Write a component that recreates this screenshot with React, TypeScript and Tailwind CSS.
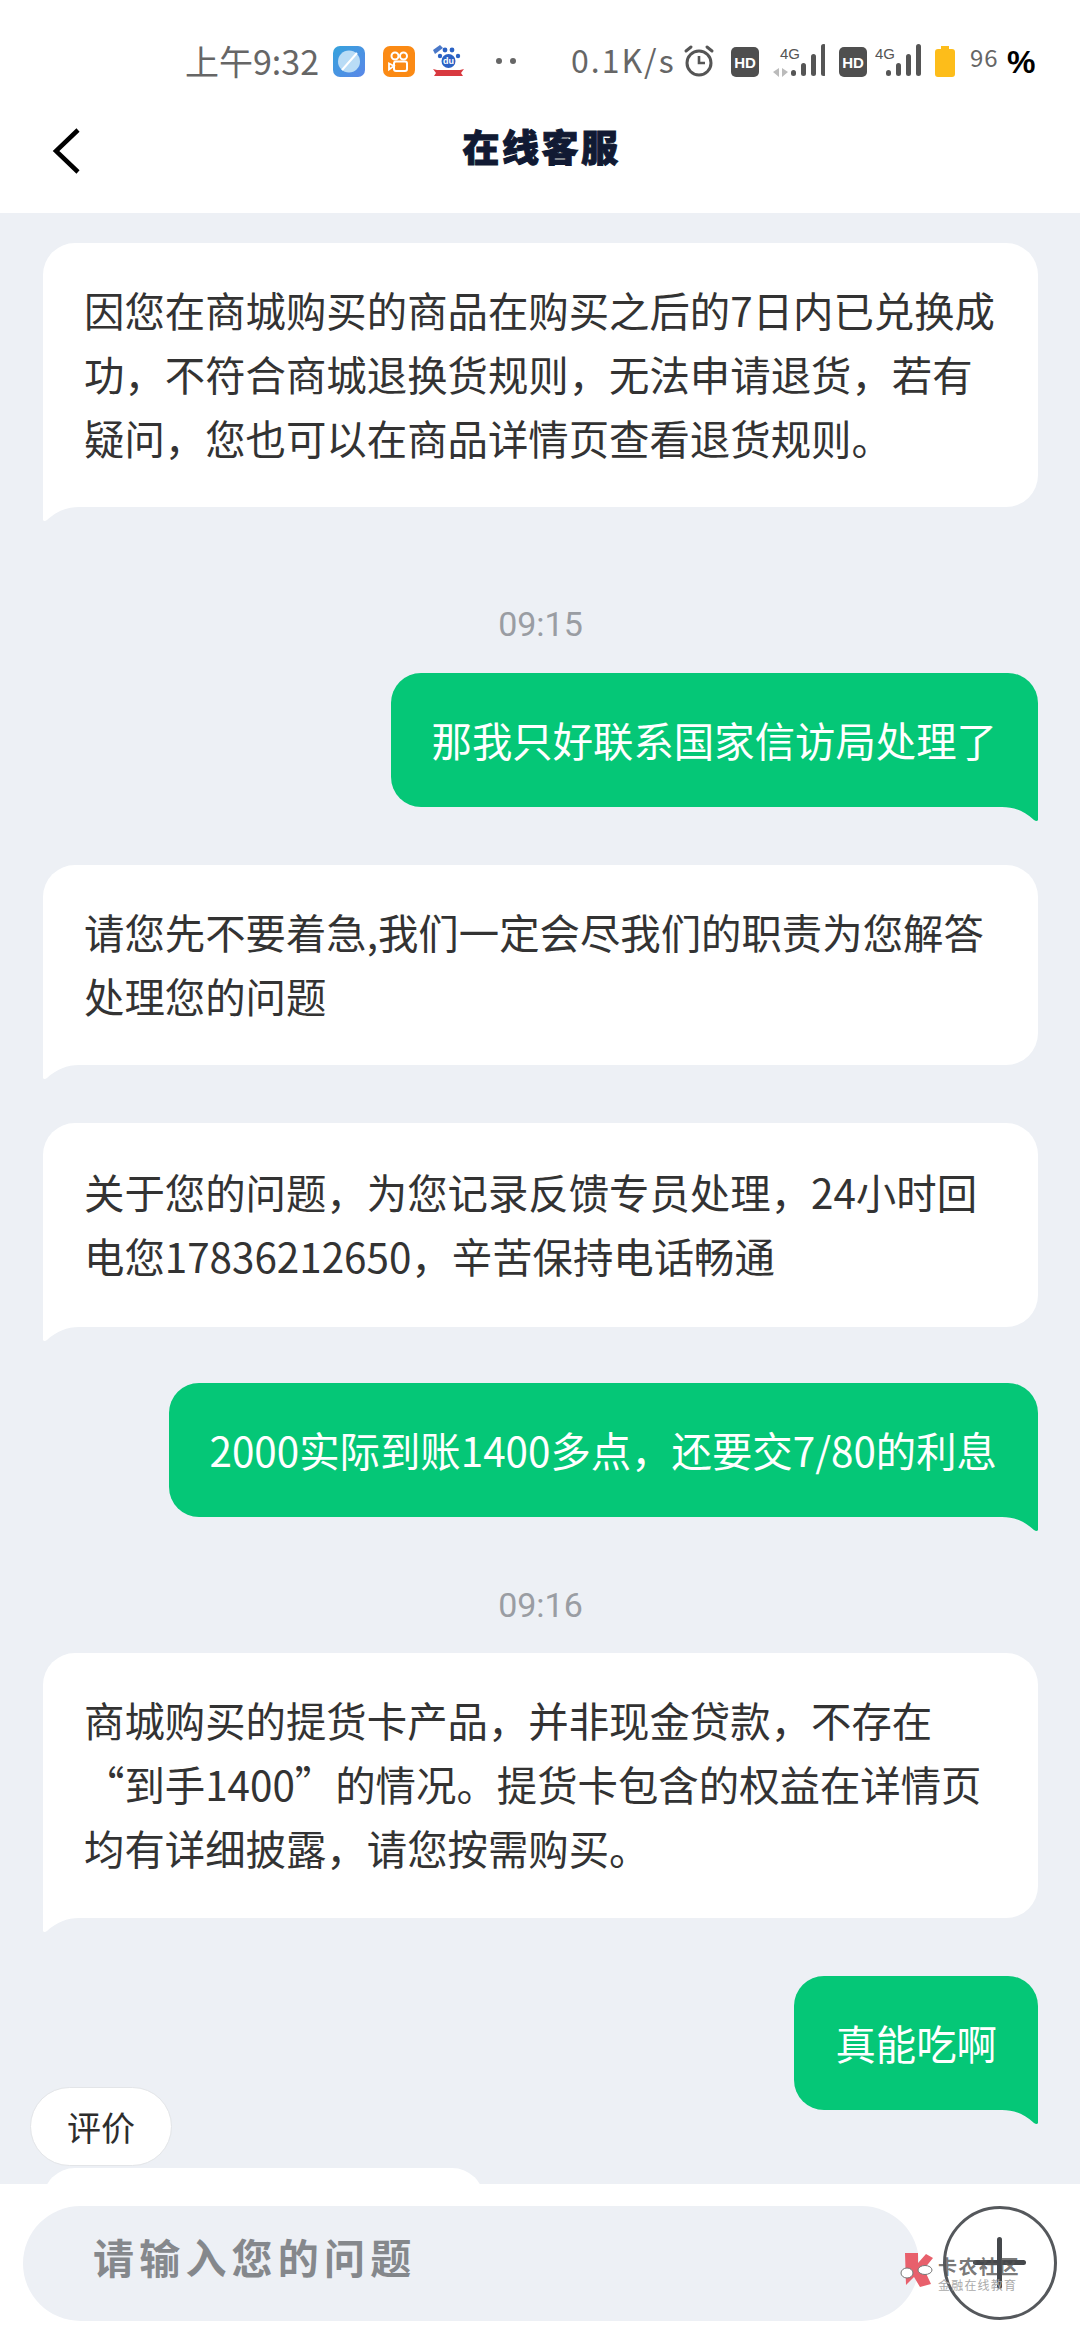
import React from 'react';

const cjk = { fontFamily: '"Noto Sans CJK SC", "Noto Sans", sans-serif' };

const Bubble = ({ side, children, className = '' }: { side: 'left' | 'right'; children: React.ReactNode; className?: string }) => {
  if (side === 'left') {
    return (
      <div className={`relative w-fit max-w-[995px] self-start rounded-[32px] rounded-bl-none bg-white px-[41px] text-[40.4px] leading-[64px] text-[#333333] ${className}`}>
        {children}
        <svg className="absolute left-0 top-full" width="36" height="15" viewBox="0 0 36 15">
          <path d="M0 0H36C24 0 14 4 4 13Q1 15 0 13Z" fill="#ffffff" />
        </svg>
      </div>
    );
  }
  return (
    <div className={`relative w-fit max-w-[995px] self-end rounded-[30px] rounded-br-none bg-[#05c777] px-[41px] text-[40.4px] leading-[64px] text-white ${className}`}>
      {children}
      <svg className="absolute right-0 top-full" width="36" height="15" viewBox="0 0 36 15">
        <path d="M36 0H0C12 0 22 4 32 13Q35 15 36 13Z" fill="#05c777" />
      </svg>
    </div>
  );
};

const Signal = ({ x = 0 }: { x?: number }) => (
  <g transform={`translate(${x} 0)`} fill="#555">
    <rect x="0" y="26" width="5" height="6" rx="2.5" />
    <rect x="10" y="19" width="5" height="13" rx="2.5" />
    <rect x="20" y="10" width="5" height="22" rx="2.5" />
    <rect x="30" y="0" width="5" height="32" rx="2.5" />
  </g>
);

const HdIcon = () => (
  <div className="flex h-[30px] w-[28px] items-center justify-center rounded-[5px] bg-[#4f4f4f] text-[15px] font-bold leading-none text-white" style={{ fontFamily: '"Liberation Sans", sans-serif' }}>
    HD
  </div>
);

const StatusBar = () => (
  <div className="flex h-[79px] shrink-0 items-end bg-white pb-[2px] pl-[185px] text-[#666666]">
    <span className="flex h-[34px] w-[137px] items-center whitespace-nowrap text-[34px]" style={cjk}>上午9:32</span>
    <svg className="ml-[11px]" width="32" height="31" viewBox="0 0 32 31">
      <defs>
        <linearGradient id="blueApp" x1="0" y1="0" x2="1" y2="1">
          <stop offset="0" stopColor="#35a3dc" />
          <stop offset="1" stopColor="#5a86e8" />
        </linearGradient>
      </defs>
      <rect width="32" height="31" rx="7" fill="url(#blueApp)" />
      <circle cx="16" cy="15.5" r="11" fill="#b9dcf6" />
      <path d="M9 24L24 7" stroke="#ffffff" strokeWidth="2" />
    </svg>
    <svg className="ml-[18px]" width="32" height="31" viewBox="0 0 32 31">
      <rect width="32" height="31" rx="7" fill="#fb8a14" />
      <circle cx="12" cy="10" r="3.5" fill="none" stroke="#fff" strokeWidth="2" />
      <circle cx="20.5" cy="10" r="3.5" fill="none" stroke="#fff" strokeWidth="2" />
      <rect x="11" y="15.5" width="13" height="9.5" rx="2" fill="none" stroke="#fff" strokeWidth="2" />
      <path d="M11 20L6 17.5V23.5Z" fill="none" stroke="#fff" strokeWidth="1.8" />
    </svg>
    <svg className="ml-[17px]" width="33" height="32" viewBox="0 0 33 32">
      <path d="M1 5L8 0L11 3L3 9Z" fill="#4a78c8" />
      <circle cx="13" cy="5" r="2.4" fill="#2b62c4" />
      <circle cx="20" cy="5" r="2.4" fill="#2b62c4" />
      <circle cx="8" cy="11" r="2.2" fill="#2b62c4" />
      <circle cx="26" cy="11" r="2.2" fill="#2b62c4" />
      <circle cx="16.5" cy="16" r="7" fill="#2b62c4" />
      <text x="16.5" y="19" textAnchor="middle" fontSize="9" fontWeight="700" fill="#ffffff" fontFamily="Liberation Sans, sans-serif">du</text>
      <path d="M1 24L5 25H28L32 24L29 28L31 31H2L4 28Z" fill="#d8393f" />
    </svg>
    <span className="ml-[31px] mb-[13px] flex gap-[8px]">
      <i className="block h-[6px] w-[6px] rounded-full bg-[#666666]" />
      <i className="block h-[6px] w-[6px] rounded-full bg-[#666666]" />
    </span>
    <span className="ml-[55px] mb-[1px] flex h-[34px] w-[101px] items-center whitespace-nowrap text-[32px] tracking-[2px]" style={cjk}>0.1K/s</span>
    <svg className="ml-[11px]" width="32" height="33" viewBox="0 0 32 33" fill="none" stroke="#555" strokeWidth="3">
      <circle cx="16" cy="19" r="12" />
      <path d="M16 12V19H22" strokeWidth="2.6" />
      <path d="M3 7L8 3M29 7L24 3" strokeLinecap="round" />
    </svg>
    <div className="ml-[16px]"><HdIcon /></div>
    <svg className="ml-[13px]" width="53" height="33" viewBox="0 0 53 33">
      <text x="8" y="15" fontSize="15" fill="#555" fontFamily="Liberation Sans, sans-serif">4G</text>
      <path d="M7 24V33L1 28ZM10 24V33L16 28Z" fill="#bbbbbb" />
      <Signal x={19} />
    </svg>
    <div className="ml-[14px]"><HdIcon /></div>
    <svg className="ml-[8px]" width="46" height="33" viewBox="0 0 46 33">
      <text x="0" y="15" fontSize="15" fill="#555" fontFamily="Liberation Sans, sans-serif">4G</text>
      <Signal x={11} />
    </svg>
    <svg className="ml-[14px]" width="20" height="31" viewBox="0 0 20 31">
      <path d="M6 0H14V3H17Q20 3 20 6V28Q20 31 17 31H3Q0 31 0 28V6Q0 3 3 3H6Z" fill="#fdbd1a" />
    </svg>
    <span className="ml-[15px] mb-[6px] w-[30px] text-[24px] leading-[28px] tracking-[1px]" style={cjk}>96</span>
    <span className="ml-[7px] text-[32px] font-bold leading-[30px] text-black" style={{ fontFamily: '"Liberation Sans", sans-serif' }}>%</span>
  </div>
);

const Header = () => (
  <div className="relative flex h-[134px] shrink-0 items-center justify-center bg-white">
    <svg className="absolute left-[50px] top-[48px]" width="32" height="48" viewBox="0 0 32 48" fill="none">
      <path d="M28 3L6 24L28 45" stroke="#000000" strokeWidth="4.5" />
    </svg>
    <h1 className="mt-[2px] pl-[3px] text-[37px] font-black tracking-[2.5px] text-[#111a33] [-webkit-text-stroke:1px_#111a33]" style={cjk}>在线客服</h1>
  </div>
);

const Time = ({ children, className = '' }: { children: React.ReactNode; className?: string }) => (
  <div className={`text-center text-[34px] leading-[44px] text-[#9a9da3] ${className}`} style={{ fontFamily: 'Roboto, sans-serif' }}>{children}</div>
);

const App = () => {
  return (
    <div className="relative flex h-[2340px] w-[1080px] flex-col overflow-hidden bg-[#edf0f5]" style={cjk}>
      <StatusBar />
      <Header />

      <div className="relative flex min-h-0 flex-1 flex-col overflow-hidden pl-[43px] pr-[42px] pt-[30px]">
        <Bubble side="left" className="pb-[37px] pt-[35px]">因您在商城购买的商品在购买之后的7日内已兑换成功，不符合商城退换货规则，无法申请退货，若有疑问，您也可以在商品详情页查看退货规则。</Bubble>
        <Time className="mt-[95px]">09:15</Time>
        <Bubble side="right" className="mt-[27px] pb-[35px] pt-[35px]">那我只好联系国家信访局处理了</Bubble>
        <Bubble side="left" className="mt-[58px] pb-[37px] pt-[35px]">请您先不要着急,我们一定会尽我们的职责为您解答处理您的问题</Bubble>
        <Bubble side="left" className="mt-[58px] pb-[39px] pt-[37px]">关于您的问题，为您记录反馈专员处理，24小时回电您17836212650，辛苦保持电话畅通</Bubble>
        <Bubble side="right" className="mt-[56px] pb-[35px] pt-[35px]">2000实际到账1400多点，还要交7/80的利息</Bubble>
        <Time className="mt-[66px]">09:16</Time>
        <Bubble side="left" className="mt-[26px] !w-[995px] pb-[38px] pt-[35px]">
          商城购买的提货卡产品，并非现金贷款，不存在<br />“到手1400”的情况。提货卡包含的权益在详情页<br />均有详细披露，请您按需购买。
        </Bubble>
        <Bubble side="right" className="mt-[58px] pb-[35px] pt-[35px]">真能吃啊</Bubble>
        <div className="mt-[58px] h-[120px] w-[441px] shrink-0 rounded-t-[32px] bg-white" />

        <div className="absolute left-[30px] top-[1874px] flex h-[79px] w-[142px] items-center justify-center rounded-[40px] border border-[#e3e5e8] bg-white text-[34px] text-[#2d2d2d]">评价</div>
      </div>

      <div className="relative flex h-[156px] shrink-0 items-start bg-white pl-[23px] pt-[22px]">
        <div className="flex h-[115px] w-[896px] items-center rounded-[58px] bg-[#edf0f5] pb-[14px] pl-[70px] text-[41px] font-bold tracking-[5.2px] text-[#85888c]">请输入您的问题</div>
        <div className="relative ml-[24px] h-[114px] w-[114px] rounded-full border-[3px] border-[#55585c]">
          <span className="absolute left-[51px] top-[28px] h-[52px] w-[5px] rounded-full bg-[#45484c]" />
          <span className="absolute left-[27px] top-[51px] h-[5px] w-[53px] rounded-full bg-[#45484c]" />
        </div>
        <div className="absolute left-[900px] top-[69px] flex items-start gap-[5px]">
          <svg width="33" height="34" viewBox="0 0 33 34">
            <path d="M5 0H18V10L26 1L33 5L24 16L31 31L20 34L14 24L6 32Z" fill="#e8606c" />
            <ellipse cx="7" cy="20" rx="6" ry="5" fill="#ffffff" stroke="#777777" strokeWidth="1" />
            <ellipse cx="25" cy="17" rx="7" ry="4.5" fill="#ffffff" stroke="#777777" strokeWidth="1" />
          </svg>
          <div className="flex flex-col pt-[3px]">
            <span className="text-[19px] font-bold leading-[20px] tracking-[1.5px] text-[#555555]/80">卡农社区</span>
            <span className="mt-[2px] text-[12px] leading-[14px] tracking-[1.2px] text-[#aaaaaa]">金融在线教育</span>
          </div>
        </div>
      </div>
    </div>
  );
};

export default App;
